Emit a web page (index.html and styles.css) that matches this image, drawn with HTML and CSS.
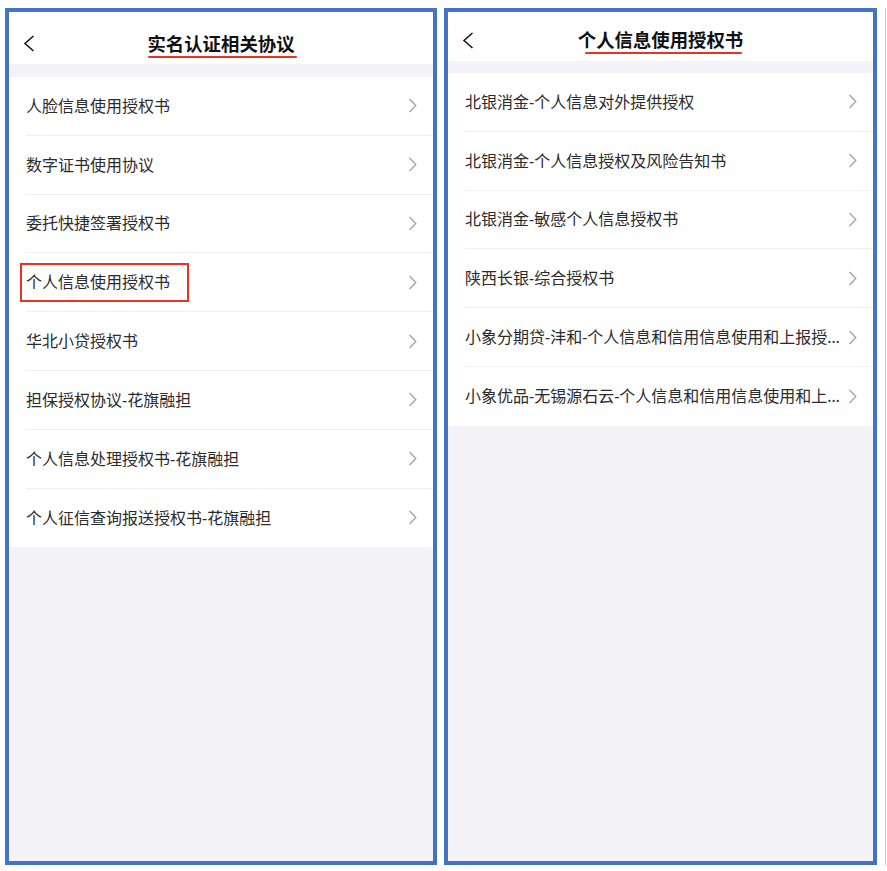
FILE: index.html
```html
<!DOCTYPE html>
<html lang="zh-CN">
<head>
    <meta charset="UTF-8">
    <meta name="viewport" content="width=device-width, initial-scale=1.0">
    <title>实名认证相关协议</title>
    <link rel="stylesheet" href="styles.css">
</head>
<body>

    <div class="phone phone-left">
        <div class="header">
            <svg class="back" width="12" height="17" viewBox="0 0 12 17"><polyline points="10.5,1 2,8.5 10.5,16" fill="none" stroke="#111" stroke-width="1.5"/></svg>
            <h1 class="title">实名认证相关协议</h1>
            <span></span>
        </div>
        <div class="gap"></div>
        <ul class="list">
            <li class="row"><span class="label">人脸信息使用授权书</span><svg class="arrow" width="9" height="15" viewBox="0 0 9 15"><polyline points="1.5,1 7.8,7.5 1.5,14" fill="none" stroke="#a4a4b6" stroke-width="1.4"/></svg></li>
            <li class="row"><span class="label">数字证书使用协议</span><svg class="arrow" width="9" height="15" viewBox="0 0 9 15"><polyline points="1.5,1 7.8,7.5 1.5,14" fill="none" stroke="#a4a4b6" stroke-width="1.4"/></svg></li>
            <li class="row"><span class="label">委托快捷签署授权书</span><svg class="arrow" width="9" height="15" viewBox="0 0 9 15"><polyline points="1.5,1 7.8,7.5 1.5,14" fill="none" stroke="#a4a4b6" stroke-width="1.4"/></svg></li>
            <li class="row row-marked"><span class="label">个人信息使用授权书</span><svg class="arrow" width="9" height="15" viewBox="0 0 9 15"><polyline points="1.5,1 7.8,7.5 1.5,14" fill="none" stroke="#a4a4b6" stroke-width="1.4"/></svg></li>
            <li class="row"><span class="label">华北小贷授权书</span><svg class="arrow" width="9" height="15" viewBox="0 0 9 15"><polyline points="1.5,1 7.8,7.5 1.5,14" fill="none" stroke="#a4a4b6" stroke-width="1.4"/></svg></li>
            <li class="row"><span class="label">担保授权协议-花旗融担</span><svg class="arrow" width="9" height="15" viewBox="0 0 9 15"><polyline points="1.5,1 7.8,7.5 1.5,14" fill="none" stroke="#a4a4b6" stroke-width="1.4"/></svg></li>
            <li class="row"><span class="label">个人信息处理授权书-花旗融担</span><svg class="arrow" width="9" height="15" viewBox="0 0 9 15"><polyline points="1.5,1 7.8,7.5 1.5,14" fill="none" stroke="#a4a4b6" stroke-width="1.4"/></svg></li>
            <li class="row"><span class="label">个人征信查询报送授权书-花旗融担</span><svg class="arrow" width="9" height="15" viewBox="0 0 9 15"><polyline points="1.5,1 7.8,7.5 1.5,14" fill="none" stroke="#a4a4b6" stroke-width="1.4"/></svg></li>
        </ul>
    </div>

    <div class="phone phone-right">
        <div class="header">
            <svg class="back" width="12" height="17" viewBox="0 0 12 17"><polyline points="10.5,1 2,8.5 10.5,16" fill="none" stroke="#111" stroke-width="1.5"/></svg>
            <h1 class="title">个人信息使用授权书</h1>
            <span></span>
        </div>
        <div class="gap"></div>
        <ul class="list">
            <li class="row"><span class="label">北银消金-个人信息对外提供授权</span><svg class="arrow" width="9" height="15" viewBox="0 0 9 15"><polyline points="1.5,1 7.8,7.5 1.5,14" fill="none" stroke="#a4a4b6" stroke-width="1.4"/></svg></li>
            <li class="row"><span class="label">北银消金-个人信息授权及风险告知书</span><svg class="arrow" width="9" height="15" viewBox="0 0 9 15"><polyline points="1.5,1 7.8,7.5 1.5,14" fill="none" stroke="#a4a4b6" stroke-width="1.4"/></svg></li>
            <li class="row"><span class="label">北银消金-敏感个人信息授权书</span><svg class="arrow" width="9" height="15" viewBox="0 0 9 15"><polyline points="1.5,1 7.8,7.5 1.5,14" fill="none" stroke="#a4a4b6" stroke-width="1.4"/></svg></li>
            <li class="row"><span class="label">陕西长银-综合授权书</span><svg class="arrow" width="9" height="15" viewBox="0 0 9 15"><polyline points="1.5,1 7.8,7.5 1.5,14" fill="none" stroke="#a4a4b6" stroke-width="1.4"/></svg></li>
            <li class="row row-long"><span class="label">小象分期贷-沣和-个人信息和信用信息使用和上报授权书</span><svg class="arrow" width="9" height="15" viewBox="0 0 9 15"><polyline points="1.5,1 7.8,7.5 1.5,14" fill="none" stroke="#a4a4b6" stroke-width="1.4"/></svg></li>
            <li class="row row-long"><span class="label">小象优品-无锡源石云-个人信息和信用信息使用和上报授权书</span><svg class="arrow" width="9" height="15" viewBox="0 0 9 15"><polyline points="1.5,1 7.8,7.5 1.5,14" fill="none" stroke="#a4a4b6" stroke-width="1.4"/></svg></li>
        </ul>
    </div>

    <div class="edge"></div>

</body>
</html>
```

FILE: styles.css
```css
:root {
    --frame-color: #4472c4;
    --mark-color: #e8331f;
    --page-gray: #f4f4f8;
    --text-color: #2b2b2b;
    --line-color: #f0f0f3;
}

body {
    font-family: 'Noto Sans', 'Noto Sans CJK SC', sans-serif;
    margin: 0;
    padding: 8px 0 0 5px;
    display: flex;
    align-items: flex-start;
    gap: 7px;
    background: #ffffff;
    color: var(--text-color);
}

.phone {
    box-sizing: border-box;
    height: 857px;
    border: 4px solid var(--frame-color);
    background: var(--page-gray);
    overflow: hidden;
}

.phone-left {
    width: 432px;
}

.phone-right {
    width: 433px;
}

.edge {
    width: 1px;
    height: 857px;
    margin-left: 1px;
    background: #b9c8ea;
}

/* top bar */
.header {
    display: grid;
    grid-template-columns: 1fr auto 1fr;
    align-items: start;
    height: 52px;
    padding: 18px 0 0 14px;
    box-sizing: border-box;
    background: #ffffff;
}

.phone-right .header {
    height: 49px;
    padding-top: 14px;
}

.back {
    display: block;
    margin-top: 5px;
}

.phone-right .back {
    margin-top: 6px;
}

.title {
    position: relative;
    margin: 0;
    font-family: 'Noto Sans CJK SC', sans-serif;
    font-size: 18.4px;
    font-weight: 700;
    line-height: 26px;
    color: #111111;
    margin-left: -14px;
}

.title::after {
    content: "";
    position: absolute;
    left: 1px;
    right: -2px;
    bottom: -2px;
    height: 2px;
    border-radius: 1px;
    background: var(--mark-color);
}

.phone-right .title::after {
    left: 7px;
    right: 1px;
}

.gap {
    height: 13px;
}

.phone-right .gap {
    height: 12px;
}

/* list */
.list {
    list-style: none;
    margin: 0;
    padding: 0 0 0 17px;
    background: #ffffff;
}

.row {
    position: relative;
    display: flex;
    align-items: center;
    height: 58.8px;
    box-sizing: border-box;
    padding-right: 16px;
    border-bottom: 1px solid var(--line-color);
    font-size: 16px;
}

.row:last-child {
    border-bottom: none;
}

.row-long .label {
    margin-right: 1px;
}

.label {
    flex: 1;
    min-width: 0;
    white-space: nowrap;
    overflow: hidden;
    text-overflow: ellipsis;
    line-height: 24px;
}

.arrow {
    flex: none;
    display: block;
}

/* red annotation box */
.row-marked::after {
    content: "";
    position: absolute;
    box-sizing: border-box;
    left: -6px;
    top: 10px;
    width: 169px;
    height: 39px;
    border: 2px solid var(--mark-color);
}
```
